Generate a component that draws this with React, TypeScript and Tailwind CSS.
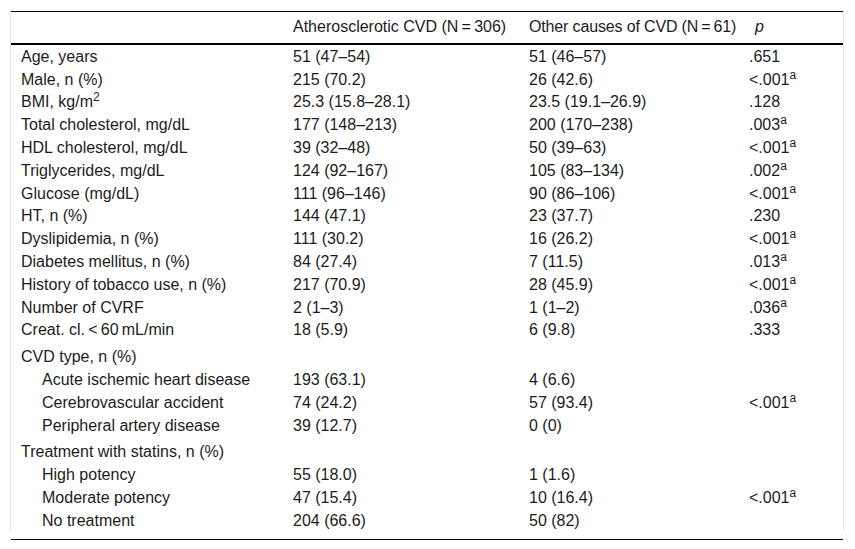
import React from 'react';

type Row = {
  label: React.ReactNode;
  a?: string;
  b?: string;
  p?: string;
  sig?: boolean;
  indent?: boolean;
  group?: boolean;
};

const T = '\u2009';

const rows: Row[] = [
  { label: 'Age, years', a: '51 (47–54)', b: '51 (46–57)', p: '.651' },
  { label: 'Male, n (%)', a: '215 (70.2)', b: '26 (42.6)', p: '<.001', sig: true },
  {
    label: (
      <>
        BMI, kg/m<sup>2</sup>
      </>
    ),
    a: '25.3 (15.8–28.1)',
    b: '23.5 (19.1–26.9)',
    p: '.128',
  },
  { label: 'Total cholesterol, mg/dL', a: '177 (148–213)', b: '200 (170–238)', p: '.003', sig: true },
  { label: 'HDL cholesterol, mg/dL', a: '39 (32–48)', b: '50 (39–63)', p: '<.001', sig: true },
  { label: 'Triglycerides, mg/dL', a: '124 (92–167)', b: '105 (83–134)', p: '.002', sig: true },
  { label: 'Glucose (mg/dL)', a: '111 (96–146)', b: '90 (86–106)', p: '<.001', sig: true },
  { label: 'HT, n (%)', a: '144 (47.1)', b: '23 (37.7)', p: '.230' },
  { label: 'Dyslipidemia, n (%)', a: '111 (30.2)', b: '16 (26.2)', p: '<.001', sig: true },
  { label: 'Diabetes mellitus, n (%)', a: '84 (27.4)', b: '7 (11.5)', p: '.013', sig: true },
  { label: 'History of tobacco use, n (%)', a: '217 (70.9)', b: '28 (45.9)', p: '<.001', sig: true },
  { label: 'Number of CVRF', a: '2 (1–3)', b: '1 (1–2)', p: '.036', sig: true },
  { label: `Creat. cl.${T}<${T}60${T}mL/min`, a: '18 (5.9)', b: '6 (9.8)', p: '.333' },
  { label: 'CVD type, n (%)', group: true },
  { label: 'Acute ischemic heart disease', a: '193 (63.1)', b: '4 (6.6)', indent: true },
  { label: 'Cerebrovascular accident', a: '74 (24.2)', b: '57 (93.4)', p: '<.001', sig: true, indent: true },
  { label: 'Peripheral artery disease', a: '39 (12.7)', b: '0 (0)', indent: true },
  { label: 'Treatment with statins, n (%)', group: true },
  { label: 'High potency', a: '55 (18.0)', b: '1 (1.6)', indent: true },
  { label: 'Moderate potency', a: '47 (15.4)', b: '10 (16.4)', p: '<.001', sig: true, indent: true },
  { label: 'No treatment', a: '204 (66.6)', b: '50 (82)', indent: true },
];

export default function App() {
  return (
    <div className="w-[855px] h-[549px] bg-white pt-[11px] pl-[10px] font-['Liberation_Sans',Arial,sans-serif] text-[16px] leading-[22.8px] text-[#1c1c1c]">
      <div className="w-[834px] h-[520px] border-x border-[#e3e3e3]">
        <table className="w-full border-collapse table-fixed">
          <colgroup>
            <col className="w-[272px]" />
            <col className="w-[236px]" />
            <col className="w-[220px]" />
            <col className="w-[104px]" />
          </colgroup>
          <thead>
            <tr className="border-t border-black border-b-2">
              <th className="pl-[10px] pt-[4px] pb-[4px] font-normal text-left whitespace-nowrap"></th>
              <th className="pl-[10px] pt-[4px] pb-[4px] font-normal text-left whitespace-nowrap">
                Atherosclerotic CVD (N{T}={T}306)
              </th>
              <th className="pl-[10px] pt-[4px] pb-[4px] font-normal text-left whitespace-nowrap tracking-[-0.15px]">
                Other causes of CVD (N{T}={T}61)
              </th>
              <th className="pl-[16px] pt-[4px] pb-[4px] font-normal text-left italic whitespace-nowrap">p</th>
            </tr>
          </thead>
          <tbody>
            {rows.map((r, i) => {
              const first = i === 0;
              const last = i === rows.length - 1;
              const pad = r.group ? 'pt-[4px]' : first ? 'pt-[1px]' : '';
              const bottom = last ? 'pb-[6px]' : '';
              return (
                <tr key={i} className={last ? 'border-b border-black' : ''}>
                  <td className={`${pad} ${bottom} ${r.indent ? 'pl-[31px]' : 'pl-[10px]'} whitespace-nowrap`}>
                    {r.label}
                  </td>
                  <td className={`${pad} ${bottom} pl-[10px] whitespace-nowrap`}>{r.a}</td>
                  <td className={`${pad} ${bottom} pl-[10px] whitespace-nowrap`}>{r.b}</td>
                  <td className={`${pad} ${bottom} pl-[10px] whitespace-nowrap`}>
                    {r.p}
                    {r.sig && <sup>a</sup>}
                  </td>
                </tr>
              );
            })}
          </tbody>
        </table>
      </div>
    </div>
  );
}
